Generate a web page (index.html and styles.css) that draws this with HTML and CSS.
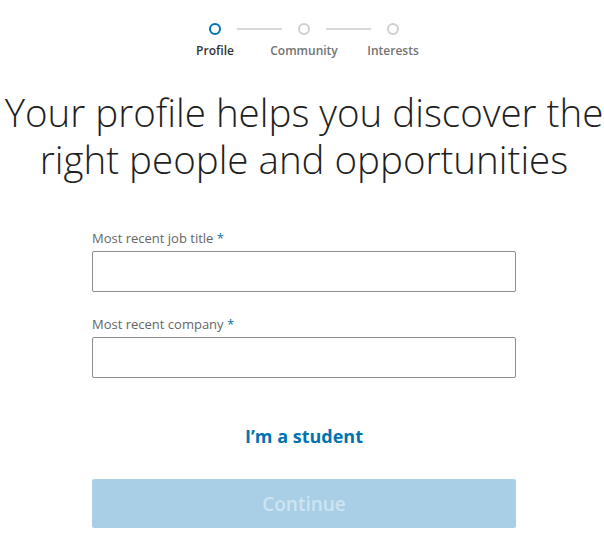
FILE: index.html
```html
<!DOCTYPE html>
<html lang="en">
<head>
    <meta charset="UTF-8">
    <meta name="viewport" content="width=device-width, initial-scale=1.0">
    <title>Profile</title>
    <link rel="stylesheet" href="styles.css">
</head>
<body>
    <div class="page">
        <ol class="steps">
            <li class="step active">
                <span class="dot"></span>
                <span class="step-name">Profile</span>
            </li>
            <li class="bar"></li>
            <li class="step">
                <span class="dot"></span>
                <span class="step-name">Community</span>
            </li>
            <li class="bar"></li>
            <li class="step">
                <span class="dot"></span>
                <span class="step-name">Interests</span>
            </li>
        </ol>

        <h1 class="title">Your profile helps you discover the<br>right people and opportunities</h1>

        <form class="form">
            <label class="field">
                <span class="label">Most recent job title <em>*</em></span>
                <input type="text" class="input">
            </label>
            <label class="field">
                <span class="label">Most recent company <em>*</em></span>
                <input type="text" class="input">
            </label>

            <a href="#" class="student">I&rsquo;m a student</a>

            <button type="button" class="continue" disabled>Continue</button>
        </form>
    </div>
</body>
</html>
```

FILE: styles.css
```css
body{
    margin:0;
    padding:0;
    background:#fff;
    font-family: "Open Sans", "Noto Sans", sans-serif;
    color:#333;
}
.page{
    padding-left:4px;
    text-align:center;
}
.steps{
    list-style:none;
    margin:0;
    padding:23px 0 0 0;
    display:flex;
    justify-content:center;
    align-items:flex-start;
}
.step{
    width:12px;
    display:flex;
    flex-direction:column;
    align-items:center;
}
.dot{
    width:8px;
    height:8px;
    border:2px solid #cfcfcf;
    border-radius:50%;
}
.step.active .dot{
    border-color:#0073b1;
}
.step-name{
    margin-top:7px;
    font-size:12px;
    font-weight:600;
    color:#737373;
    white-space:nowrap;
}
.step.active .step-name{
    color:#333;
}
.bar{
    width:45px;
    height:2px;
    margin:5px 16px 0 16px;
    background:#d9d9d9;
}
.title{
    margin:30px 0 0 0;
    font-size:38.5px;
    font-weight:300;
    line-height:47px;
    color:#1f1f1f;
}
.form{
    width:424px;
    margin:46px auto 0 auto;
    text-align:left;
}
.field{
    display:block;
    margin-bottom:23px;
}
.label{
    display:block;
    font-size:13px;
    color:#666;
    margin-bottom:4px;
}
.label em{
    font-style:normal;
    color:#0073b1;
}
.input{
    display:block;
    width:100%;
    height:41px;
    box-sizing:border-box;
    border:1px solid #8c8c8c;
    border-radius:2px;
    outline:none;
    font-size:15px;
    padding:0 10px;
}
.student{
    display:block;
    margin-top:46px;
    text-align:center;
    font-size:18px;
    font-weight:700;
    color:#0073b1;
    text-decoration:none;
}
.continue{
    display:block;
    width:100%;
    height:49px;
    margin-top:31px;
    border:none;
    border-radius:2px;
    background:#a8cfe5;
    color:rgba(255,255,255,0.45);
    font-family:inherit;
    font-size:19px;
    font-weight:600;
}
```
